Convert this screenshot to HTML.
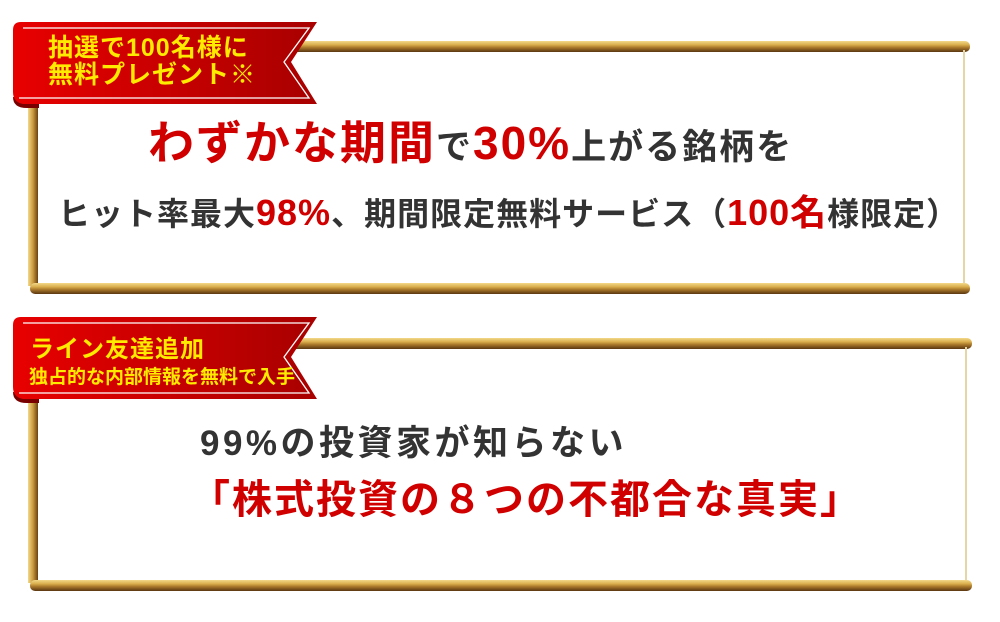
<!DOCTYPE html>
<html><head><meta charset="utf-8"><style>
body{margin:0;width:1000px;height:622px;background:#fff;position:relative;overflow:hidden;font-family:"Liberation Sans","Noto Sans CJK JP",sans-serif;font-weight:bold}
.bar{position:absolute;background:linear-gradient(#f3d98a 0%,#d9ad4c 35%,#a8772a 60%,#5a3510 100%);border-radius:5px}
.vbar{position:absolute;background:linear-gradient(90deg,#f3d98a,#c99a3e 50%,#6a4010);}
.rline{position:absolute;width:2px;background:#e6d6a6}
.rib{position:absolute;left:13px;width:304px}
.t{position:absolute;white-space:nowrap;color:#333}
.r{color:#d00000}
</style></head><body>
<div class="bar" style="left:30px;top:41px;width:940px;height:11px"></div>
<div class="vbar" style="left:28px;top:100px;width:10px;height:186px"></div>
<div class="rline" style="left:963px;top:50px;height:236px"></div>
<div class="bar" style="left:30px;top:283px;width:940px;height:11px"></div>
<div class="bar" style="left:30px;top:338px;width:942px;height:11px"></div>
<div class="vbar" style="left:28px;top:400px;width:10px;height:183px"></div>
<div class="rline" style="left:965px;top:347px;height:236px"></div>
<div class="bar" style="left:30px;top:580px;width:942px;height:11px"></div>

<svg class="rib" style="top:22px;height:86px" viewBox="0 0 304 86">
<defs><linearGradient id="g" x1="0" x2="1"><stop offset="0" stop-color="#e80000"/><stop offset="1" stop-color="#a80000"/></linearGradient></defs>
<path d="M0 75 Q0 86 14 86 L26 86 L26 78 Z" fill="#7a0000"/>
<path d="M8 0 L304 0 L278 40 L304 82 L10 82 Q0 80 0 70 L0 8 Q0 0 8 0Z" fill="url(#g)"/>
<path d="M10 6 L296 6 L271 40 L296 76 L6 76" fill="none" stroke="#fff" stroke-width="1.3"/>
</svg>
<div class="t" style="left:48px;top:35px;font-size:25px;line-height:27px;color:#ffea00;letter-spacing:1px">抽選で100名様に<br>無料プレゼント※</div>

<svg class="rib" style="top:317px;height:86px" viewBox="0 0 304 86">
<path d="M0 75 Q0 86 14 86 L26 86 L26 78 Z" fill="#7a0000"/>
<path d="M8 0 L304 0 L278 40 L304 82 L10 82 Q0 80 0 70 L0 8 Q0 0 8 0Z" fill="url(#g)"/>
<path d="M10 6 L296 6 L271 40 L296 76 L6 76" fill="none" stroke="#fff" stroke-width="1.3"/>
</svg>
<div class="t" style="left:30px;top:329px;font-size:24px;color:#ffea00;letter-spacing:1px">ライン友達追加</div>
<div class="t" style="left:29px;top:362px;font-size:19px;color:#ffea00">独占的な内部情報を無料で入手</div>

<div class="t" style="left:148px;top:117px;font-size:35px;line-height:52px;letter-spacing:2px"><span class="r" style="font-size:46px">わずかな期間</span>で<span class="r" style="font-size:46px">30%</span>上がる銘柄を</div>
<div class="t" style="left:58px;top:192px;font-size:32px;line-height:42px;letter-spacing:1px">ヒット率最大<span class="r" style="font-size:36px">98%</span>、期間限定無料サービス（<span class="r" style="font-size:36px">100名</span>様限定）</div>

<div class="t" style="left:200px;top:422px;font-size:35px;line-height:44px;letter-spacing:3.5px">99%の投資家が知らない</div>
<div class="t" style="left:190px;top:474px;font-size:40px;line-height:52px;letter-spacing:2px;color:#d00000">「株式投資の８つの不都合な真実」</div>
</body></html>
